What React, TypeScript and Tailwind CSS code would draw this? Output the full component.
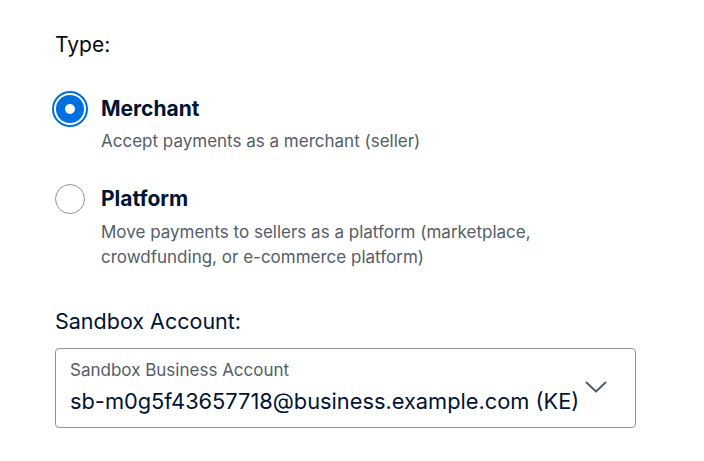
import React from "react";

export default function App() {
  return (
    <div className="w-[704px] h-[461px] bg-white" style={{ fontFamily: "Inter, 'Noto Sans', sans-serif" }}>
      <div className="pl-[55px] pt-[31px] w-[636px]">
        <div className="text-[21px] leading-[28px] text-[#0b0b0b]">Type:</div>
        <div className="mt-[32px] flex flex-col">
          <div className="flex items-start">
            <div className="w-[46px] flex">
              <div className="w-[36px] h-[36px] -ml-[3px] rounded-full border-2 border-[#0070e0] p-[2px]">
                <div className="w-full h-full rounded-full bg-[#0070e0] flex items-center justify-center">
                  <div className="w-[10px] h-[10px] rounded-full bg-white" />
                </div>
              </div>
            </div>
            <div className="flex flex-col">
              <div className="text-[21px] leading-[28px] font-bold text-[#001435] mt-[4px]">Merchant</div>
              <div className="text-[17px] leading-[25px] text-[#545d68] mt-[6px]">Accept payments as a merchant (seller)</div>
            </div>
          </div>
          <div className="flex items-start mt-[31px]">
            <div className="w-[46px] flex">
              <div className="w-[30px] h-[30px] rounded-full border border-[#929496] -mt-[1px]" />
            </div>
            <div className="flex flex-col">
              <div className="text-[21px] leading-[28px] font-bold text-[#001435]">Platform</div>
              <div className="text-[17px] leading-[25px] text-[#545d68] mt-[7px] w-[480px]">
                Move payments to sellers as a platform (marketplace, crowdfunding, or e-commerce platform)
              </div>
            </div>
          </div>
        </div>
        <div className="mt-[37px] text-[21.5px] leading-[28px] text-[#001435]">Sandbox Account:</div>
        <div className="mt-[13px] h-[80px] w-[581px] border border-[#929496] rounded-[4px] flex items-start justify-between pl-[14px] pr-[28px]">
          <div className="flex flex-col pt-[10px]">
            <div className="text-[17px] leading-[22px] text-[#545d68]">Sandbox Business Account</div>
            <div className="text-[21.8px] leading-[30px] text-[#001435] mt-[5px]">sb-m0g5f43657718@business.example.com (KE)</div>
          </div>
          <svg className="mt-[32px] shrink-0" width="22" height="13" viewBox="0 0 22 13" fill="none">
            <path d="M1.5 1.5 L11 10.5 L20.5 1.5" stroke="#545d68" strokeWidth="2" strokeLinecap="round" strokeLinejoin="round" />
          </svg>
        </div>
      </div>
    </div>
  );
}
